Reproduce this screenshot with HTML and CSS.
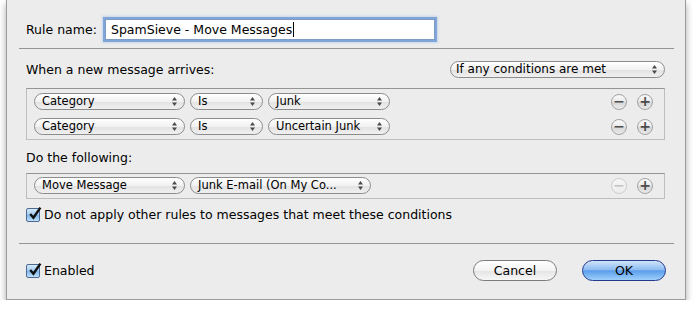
FILE: index.html
```html
<!DOCTYPE html>
<html lang="en">
<head>
    <meta charset="UTF-8">
    <title>Rule - SpamSieve</title>
    <link rel="stylesheet" href="styles.css">
</head>
<body>
    <div class="window">
        <div class="name-row">
            <label for="rule-name">Rule name:</label>
            <div class="text-field"><span id="rule-name">SpamSieve - Move Messages</span><span class="caret"></span></div>
        </div>

        <div class="separator"></div>

        <div class="section">
            <div class="heading-row">
                <span>When a new message arrives:</span>
                <div class="popup popup-any">If any conditions are met<svg class="arrows" viewBox="0 0 5 9"><polygon points="0,3.5 2.5,0 5,3.5"/><polygon points="0,5.5 2.5,9 5,5.5"/></svg></div>
            </div>

            <div class="rule-box">
                <div class="rule-row">
                    <div class="popup popup-field">Category<svg class="arrows" viewBox="0 0 5 9"><polygon points="0,3.5 2.5,0 5,3.5"/><polygon points="0,5.5 2.5,9 5,5.5"/></svg></div>
                    <div class="popup popup-op">Is<svg class="arrows" viewBox="0 0 5 9"><polygon points="0,3.5 2.5,0 5,3.5"/><polygon points="0,5.5 2.5,9 5,5.5"/></svg></div>
                    <div class="popup popup-value">Junk<svg class="arrows" viewBox="0 0 5 9"><polygon points="0,3.5 2.5,0 5,3.5"/><polygon points="0,5.5 2.5,9 5,5.5"/></svg></div>
                    <div class="row-buttons">
                        <span class="round-btn">&minus;</span>
                        <span class="round-btn">+</span>
                    </div>
                </div>
                <div class="rule-row">
                    <div class="popup popup-field">Category<svg class="arrows" viewBox="0 0 5 9"><polygon points="0,3.5 2.5,0 5,3.5"/><polygon points="0,5.5 2.5,9 5,5.5"/></svg></div>
                    <div class="popup popup-op">Is<svg class="arrows" viewBox="0 0 5 9"><polygon points="0,3.5 2.5,0 5,3.5"/><polygon points="0,5.5 2.5,9 5,5.5"/></svg></div>
                    <div class="popup popup-value">Uncertain Junk<svg class="arrows" viewBox="0 0 5 9"><polygon points="0,3.5 2.5,0 5,3.5"/><polygon points="0,5.5 2.5,9 5,5.5"/></svg></div>
                    <div class="row-buttons">
                        <span class="round-btn">&minus;</span>
                        <span class="round-btn">+</span>
                    </div>
                </div>
            </div>

            <div class="heading-row heading-plain">
                <span>Do the following:</span>
            </div>

            <div class="rule-box action-box">
                <div class="rule-row">
                    <div class="popup popup-field">Move Message<svg class="arrows" viewBox="0 0 5 9"><polygon points="0,3.5 2.5,0 5,3.5"/><polygon points="0,5.5 2.5,9 5,5.5"/></svg></div>
                    <div class="popup popup-mailbox">Junk E-mail (On My Co...<svg class="arrows" viewBox="0 0 5 9"><polygon points="0,3.5 2.5,0 5,3.5"/><polygon points="0,5.5 2.5,9 5,5.5"/></svg></div>
                    <div class="row-buttons">
                        <span class="round-btn disabled">&minus;</span>
                        <span class="round-btn">+</span>
                    </div>
                </div>
            </div>

            <div class="check-row">
                <span class="checkbox"><svg viewBox="0 0 14 14"><path d="M3 7.5 L6 11 L12.5 1.5" /></svg></span>
                <span>Do not apply other rules to messages that meet these conditions</span>
            </div>
        </div>

        <div class="separator separator-bottom"></div>

        <div class="footer">
            <div class="check-row">
                <span class="checkbox"><svg viewBox="0 0 14 14"><path d="M3 7.5 L6 11 L12.5 1.5" /></svg></span>
                <span>Enabled</span>
            </div>
            <div class="buttons">
                <button class="push-button">Cancel</button>
                <button class="push-button default">OK</button>
            </div>
        </div>
    </div>
</body>
</html>
```

FILE: styles.css
```css
body {
    margin: 0;
    padding: 0;
    background-color: #ffffff;
    font-family: "DejaVu Sans", Verdana, sans-serif;
    font-size: 12px;
    color: #000;
}
.window {
    margin-left: 6px;
    width: 680px;
    height: 300px;
    box-sizing: border-box;
    padding: 0 11px 0 12px;
    background-color: #ececec;
    border: 1px solid #9c9c9c;
    border-top: none;
    box-shadow: 0 4px 7px rgba(0, 0, 0, 0.35);
}
.name-row {
    display: flex;
    align-items: center;
    padding: 19px 0 0 7px;
    font-size: 12.5px;
}
.name-row label {
    width: 79px;
}
.text-field {
    display: flex;
    align-items: center;
    width: 323px;
    height: 19px;
    padding-left: 5px;
    background-color: #fff;
    border: 1px solid #7e9cc4;
    box-shadow: 0 0 0 2px rgba(104, 150, 214, 0.75), 0 0 2px 3px rgba(130, 170, 225, 0.35);
    font-size: 12.5px;
}
.caret {
    display: inline-block;
    width: 1px;
    height: 15px;
    margin-left: 1px;
    background-color: #000;
}
.separator {
    height: 1px;
    margin-top: 8px;
    background-color: #959595;
}
.separator-bottom {
    margin-top: 21px;
}
.section {
    padding: 0 9px 0 7px;
}
.heading-row {
    display: flex;
    align-items: center;
    justify-content: space-between;
    margin-top: 12px;
    height: 17px;
    font-size: 12.5px;
}
.heading-plain {
    margin-top: 9px;
}
.rule-box {
    margin-top: 10px;
    padding: 4px 0 4px 7px;
    border: 1px solid #bdbdbd;
    border-top-color: #959595;
    display: flex;
    flex-direction: column;
    gap: 8px;
}
.action-box {
    margin-top: 7px;
    padding: 3px 0 4px 7px;
}
.rule-row {
    display: flex;
    align-items: center;
    gap: 5px;
    height: 17px;
}
.popup {
    position: relative;
    box-sizing: border-box;
    height: 17px;
    padding: 0 0 0 7px;
    border: 1px solid #8c8c8c;
    border-radius: 9px;
    background: linear-gradient(#ffffff, #f1f1f1 50%, #e2e2e2 51%, #f0f0f0);
    font-size: 11.5px;
    line-height: 15px;
    white-space: nowrap;
}
.arrows {
    position: absolute;
    right: 7px;
    top: 3px;
    width: 5px;
    height: 9px;
    fill: #4a4a4a;
}
.popup-any {
    width: 215px;
    font-size: 12px;
    padding-left: 5px;
}
.popup-field {
    width: 151px;
}
.popup-op {
    width: 73px;
}
.popup-value {
    width: 122px;
}
.popup-mailbox {
    width: 181px;
}
.row-buttons {
    display: flex;
    gap: 10px;
    margin-left: auto;
    margin-right: 11px;
}
.round-btn {
    box-sizing: border-box;
    width: 16px;
    height: 16px;
    border-radius: 50%;
    border: 1px solid #a3a3a3;
    background: linear-gradient(#fbfbfb, #e9e9e9 50%, #d6d6d6 51%, #eaeaea);
    color: #4d4d4d;
    font-weight: bold;
    font-size: 14px;
    line-height: 13px;
    text-align: center;
}
.round-btn.disabled {
    color: #c2c2c2;
    border-color: #cdcdcd;
    background: linear-gradient(#f6f6f6, #ececec);
}
.check-row {
    display: flex;
    align-items: center;
    gap: 4px;
    margin-top: 8px;
    font-size: 12.5px;
}
.checkbox {
    box-sizing: border-box;
    width: 14px;
    height: 14px;
    border: 1px solid #4b6a93;
    border-radius: 2px;
    background: linear-gradient(#d9ebfb, #9cc6ef 50%, #7fb3e8 51%, #bfe0fb);
}
.checkbox svg {
    display: block;
    width: 15px;
    height: 15px;
    margin: -3px 0 0 0;
    fill: none;
    stroke: #111;
    stroke-width: 2.2;
}
.footer {
    display: flex;
    align-items: center;
    justify-content: space-between;
    padding: 0 8px 0 7px;
    margin-top: 16px;
}
.footer .check-row {
    margin-top: 0;
}
.buttons {
    display: flex;
    gap: 25px;
}
.push-button {
    box-sizing: border-box;
    width: 84px;
    height: 21px;
    border: 1px solid #7b7b7b;
    border-radius: 11px;
    background: linear-gradient(#ffffff, #f3f3f3 50%, #e4e4e4 51%, #f7f7f7);
    font-family: "DejaVu Sans", Verdana, sans-serif;
    font-size: 12.5px;
    padding: 0;
}
.push-button.default {
    border-color: #26388c;
    background: linear-gradient(#cfe4fb, #8fbdf2 45%, #5b9eec 52%, #9fd0fb);
}
```
